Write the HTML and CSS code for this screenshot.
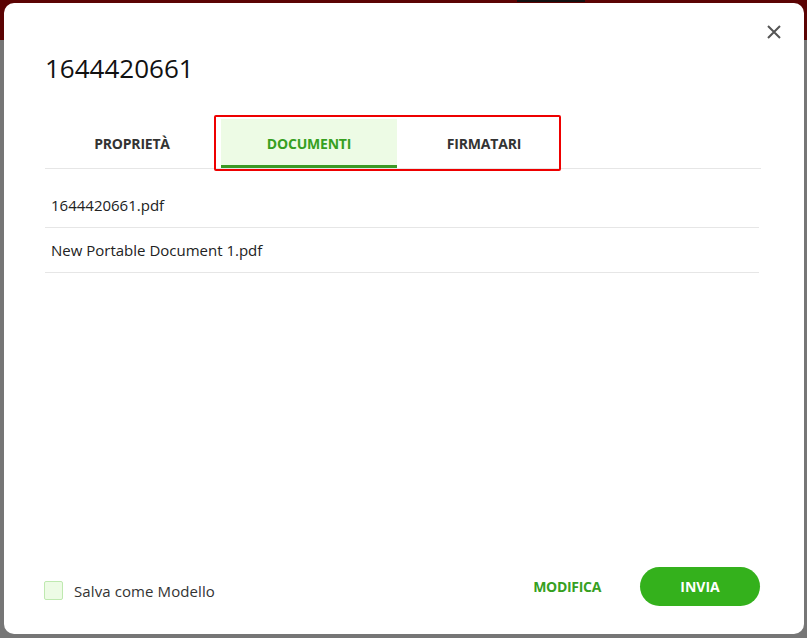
FILE: index.html
```html
<!DOCTYPE html>
<html lang="it">
<head>
<meta charset="utf-8">
<title>1644420661</title>
<link rel="stylesheet" href="styles.css">
</head>
<body>
<div class="topmark"></div>
<div class="dialog">
  <button class="close" aria-label="Chiudi">
    <svg width="14" height="14" viewBox="0 0 14 14"><path d="M1 1L13 13M13 1L1 13" stroke="#555" stroke-width="2" fill="none"/></svg>
  </button>
  <h1 class="title">1644420661</h1>
  <div class="tabs">
    <div class="tab">PROPRIETÀ</div>
    <div class="tab active">DOCUMENTI</div>
    <div class="tab">FIRMATARI</div>
  </div>
  <div class="highlight"></div>
  <ul class="docs">
    <li class="doc">1644420661.pdf</li>
    <li class="doc">New Portable Document 1.pdf</li>
  </ul>
  <div class="footer">
    <label class="save">
      <span class="checkbox"></span>
      <span class="save-text">Salva come Modello</span>
    </label>
    <div class="actions">
      <button class="link-btn">MODIFICA</button>
      <button class="primary-btn">INVIA</button>
    </div>
  </div>
</div>
</body>
</html>
```

FILE: styles.css
```css
html, body {
  margin: 0;
  padding: 0;
}
body {
  width: 807px;
  height: 638px;
  overflow: hidden;
  background: linear-gradient(to bottom, #5b0303 0, #5b0303 40px, #767676 40px, #767676 100%);
  font-family: "Open Sans", "Noto Sans", sans-serif;
  position: relative;
}
.topmark {
  position: absolute;
  left: 517px;
  top: 0;
  width: 68px;
  height: 2px;
  background: #111;
}
.dialog {
  position: relative;
  box-sizing: border-box;
  width: 800px;
  height: 631px;
  margin: 3px 0 0 4px;
  padding: 47px 43px 28px 41px;
  background: #fff;
  border-radius: 10px;
  display: flex;
  flex-direction: column;
}
.close {
  position: absolute;
  top: 22px;
  right: 23px;
  width: 14px;
  height: 14px;
  padding: 0;
  border: 0;
  background: none;
  display: flex;
}
.title {
  margin: 0;
  font-weight: 400;
  font-size: 26px;
  line-height: 36px;
  color: #111;
}
.tabs {
  margin-top: 33px;
  display: flex;
  border-bottom: 1px solid #e6e6e6;
}
.tab {
  box-sizing: border-box;
  width: 176px;
  height: 49px;
  border-bottom: 3px solid transparent;
  display: flex;
  align-items: center;
  justify-content: center;
  padding-top: 2px;
  font-size: 14px;
  font-weight: 700;
  color: #333;
  letter-spacing: -0.2px;
}
.tab.active {
  background: #edfbe5;
  border-bottom-color: #3a9a24;
  color: #36a01f;
}
.tab:first-child {
  padding-right: 2px;
}
.tab:last-child {
  padding-right: 2px;
}
.highlight {
  position: absolute;
  left: 210px;
  top: 112px;
  width: 347px;
  height: 56px;
  box-sizing: border-box;
  border: 2px solid #ee0000;
  border-radius: 2px;
}
.docs {
  list-style: none;
  margin: 14px 2px 0 0;
  padding: 0;
}
.doc {
  height: 44px;
  border-bottom: 1px solid #e6e6e6;
  padding-left: 6px;
  display: flex;
  align-items: center;
  font-size: 15px;
  color: #222;
}
.footer {
  margin-top: auto;
  display: flex;
  align-items: center;
  justify-content: space-between;
}
.save {
  display: flex;
  align-items: center;
  gap: 11px;
  padding-top: 8px;
  margin-left: -1px;
}
.checkbox {
  box-sizing: border-box;
  width: 19px;
  height: 19px;
  border: 1px solid #bfe9b0;
  border-radius: 2px;
  background: #edfbe5;
}
.save-text {
  font-size: 15px;
  color: #333;
  letter-spacing: 0.1px;
}
.actions {
  display: flex;
  align-items: center;
  gap: 39px;
  margin-right: 1px;
}
.link-btn {
  border: 0;
  background: none;
  padding: 0;
  font-family: inherit;
  font-size: 14px;
  font-weight: 700;
  color: #36a01f;
  letter-spacing: -0.3px;
}
.primary-btn {
  width: 120px;
  height: 39px;
  border: 0;
  border-radius: 20px;
  background: #34b11c;
  color: #fff;
  font-family: inherit;
  font-size: 14px;
  font-weight: 700;
}
```
